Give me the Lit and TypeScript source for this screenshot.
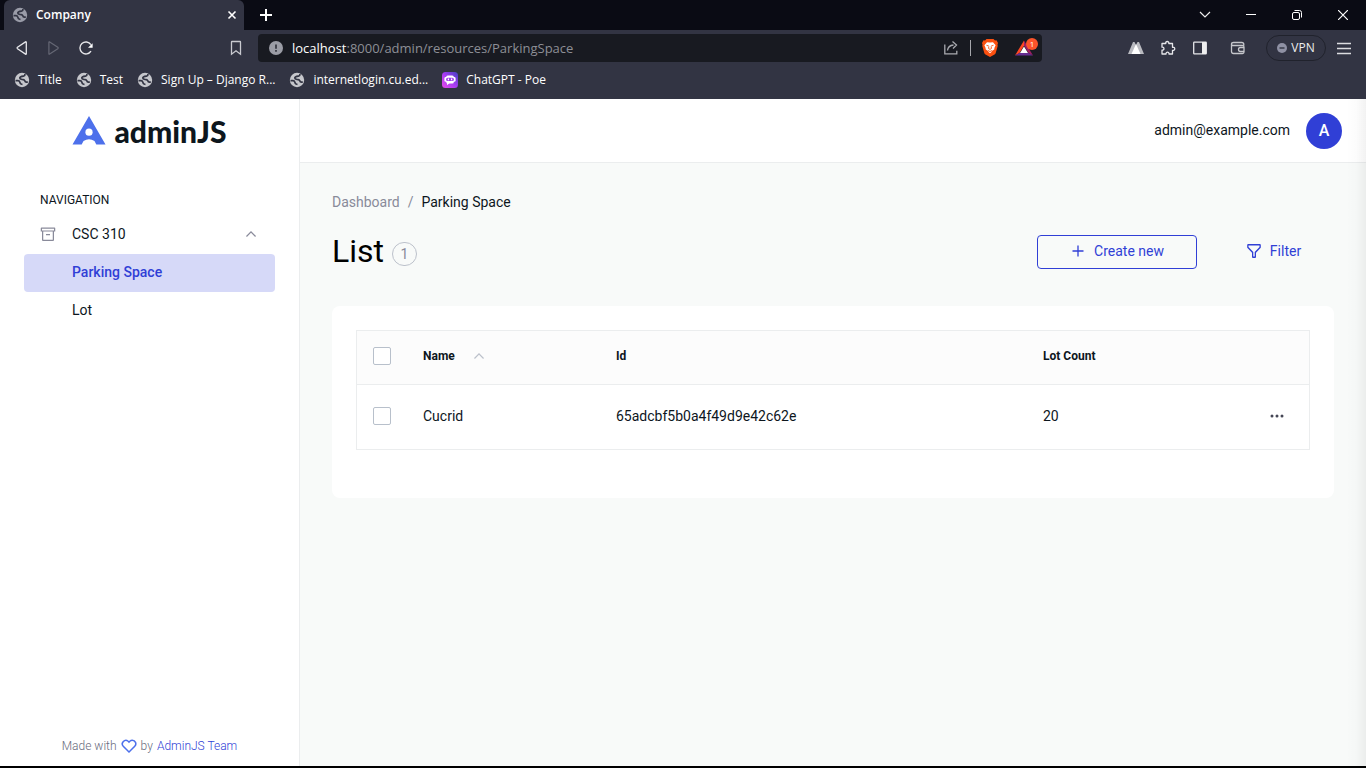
import { LitElement, html, css, svg } from "lit";
import { customElement, property } from "lit/decorators.js";

const globe = html`<svg class="globe" viewBox="0 0 16 16" width="16" height="16" aria-hidden="true">
  <circle cx="8" cy="8" r="7.200" fill="currentColor" />
  <path d="M1.500 8.600H4q1.700.2 1.900 1.700.1 1.700 2.600 2.200M11 1.800q.2 1.900-1.600 2.400-3.600.4-3.600 1.900 0 1.100 2 1.200 2.600 0 3 1.500.3 1.300 1.600 1.300h1.400"
    fill="none" stroke="#323443" stroke-width="1.700" stroke-linejoin="round" />
</svg>`;

const poe = html`<svg viewBox="0 0 16 16" width="16" height="16" aria-hidden="true">
  <defs><linearGradient id="poe" x1="0" y1="1" x2="1" y2="0">
    <stop offset="0" stop-color="#e84be8" /><stop offset=".5" stop-color="#a63bf2" /><stop offset="1" stop-color="#4340c0" />
  </linearGradient></defs>
  <rect width="16" height="16" rx="3.500" fill="url(#poe)" />
  <rect x="4.200" y="3.600" width="7.600" height="8" rx="1.500" fill="#fff" />
  <rect x="2.400" y="5" width="11.200" height="4.800" rx="1.400" fill="#fff" />
  <path d="M5 11v2.200L7.600 11z" fill="#fff" />
  <rect x="4" y="5.700" width="8" height="3.400" rx="1.700" fill="#a03bee" />
  <path d="M6.400 6.600v1.600M9.600 6.600v1.600" stroke="#fff" stroke-width="1.200" />
</svg>`;

@customElement("browser-frame")
class BrowserFrame extends LitElement {
  @property({ type: Array }) bookmarks = [
    { label: "Title", icon: globe },
    { label: "Test", icon: globe },
    { label: "Sign Up – Django R...", icon: globe },
    { label: "internetlogin.cu.ed...", icon: globe },
    { label: "ChatGPT - Poe", icon: poe },
  ];

  static styles = css`
    :host {
      display: block;
      background: #323443;
      color: #fff;
      font: 12px/16px "Open Sans", "Noto Sans", sans-serif;
    }
    * { box-sizing: border-box; }
    svg { display: block; flex: none; }
    button {
      display: flex; align-items: center; justify-content: center;
      border: 0; padding: 0; margin: 0; background: none; color: inherit; font: inherit;
    }
    .tabs { display: flex; height: 30px; background: #0a0b14; padding-left: 4px; }
    .tab {
      display: flex; align-items: center; gap: 8px; width: 240px; padding: 0 7px 0 8px;
      background: #323443; border-radius: 6px 6px 0 0; font-weight: 600;
    }
    .tab .globe { color: #9a9ca8; }
    .tab-title { flex: 1; }
    .add { width: 44px; }
    .window { display: flex; margin-left: auto; }
    .window button { width: 46px; }
    .toolbar { display: flex; align-items: center; height: 36px; padding: 0 14px; }
    .nav { display: flex; gap: 16px; width: 230px; }
    .nav .save { margin-left: auto; }
    .omnibox {
      display: flex; align-items: center; gap: 8px; width: 784px; height: 28px;
      margin-left: 14px; padding: 0 4px 0 10px; background: #181a21; border-radius: 4px;
    }
    .url { flex: 1; font-size: 13px; line-height: 18px; color: #8d8f96; white-space: nowrap; }
    .host { color: #fff; }
    .tools { display: flex; align-items: center; gap: 11px; }
    .rule { width: 1px; height: 16px; background: #a6a7ac; }
    .rewards { display: flex; margin-left: 6px; }
    .right { display: flex; align-items: center; margin-left: auto; gap: 16px; }
    .vpn {
      gap: 4px; width: 60px; height: 26px; border: 1px solid #20222c; border-radius: 13px;
      color: #eceded; margin-left: 4px;
    }
    .menu { margin-left: -6px; }
    .wallet { margin-left: 6px; }
    .bookmarks { display: flex; gap: 14px; height: 33px; padding: 6px 14px 0; }
    .bookmark { display: flex; align-items: center; gap: 8px; height: 16px; color: #fff; text-decoration: none; white-space: nowrap; }
    .bookmark .globe { color: #c6c7cc; }
    @media (max-width: 1320px) { .omnibox { width: auto; flex: 1; margin-right: 16px; } }
  `;

  render() {
    return html`
      <div class="tabs">
        <div class="tab">
          ${globe}<span class="tab-title">Company</span>
          <button aria-label="Close tab"><svg width="10" height="10" viewBox="0 0 10 10"><path d="M1.500 1.500l7 7M8.500 1.500l-7 7" stroke="#fff" stroke-width="1.600" /></svg></button>
        </div>
        <button class="add" aria-label="New tab"><svg width="12" height="12" viewBox="0 0 12 12"><path d="M6 0v12M0 6h12" stroke="#fff" stroke-width="2" /></svg></button>
        <div class="window">
          <button aria-label="Search tabs"><svg width="12" height="12" viewBox="0 0 12 12"><path d="M1 3l5 5 5-5" fill="none" stroke="#eee" stroke-width="1.200" /></svg></button>
          <button aria-label="Minimize"><svg width="10" height="10" viewBox="0 0 10 10"><path d="M0 4.500h10" stroke="#fff" /></svg></button>
          <button aria-label="Restore"><svg width="10" height="10" viewBox="0 0 10 10"><g fill="none" stroke="#fff"><rect x=".5" y="2.500" width="7" height="7" rx="1.500" /><path d="M2.500.500h5a2 2 0 0 1 2 2v5" /></g></svg></button>
          <button aria-label="Close"><svg width="10" height="10" viewBox="0 0 10 10"><path d="M0 0l10 10M10 0L0 10" stroke="#fff" stroke-width="1.200" /></svg></button>
        </div>
      </div>
      <div class="toolbar">
        <div class="nav">
          <button aria-label="Back"><svg width="16" height="16" viewBox="0 0 16 16"><path d="M12.300 2.300v11.400q0 .8-.8.400L3.500 8.700q-.8-.7 0-1.400l8-5.400q.8-.4.800.4z" fill="none" stroke="#e6e6ea" stroke-width="1.300" /></svg></button>
          <button aria-label="Forward"><svg width="16" height="16" viewBox="0 0 16 16"><path d="M2.900 2.300v11.400q0 .8.800.400L11.800 8.700q.8-.7 0-1.400L3.700 1.900q-.8-.4-.8.400z" fill="none" stroke="#656774" stroke-width="1.200" /></svg></button>
          <button aria-label="Reload"><svg width="16" height="16" viewBox="0 0 16 16"><path d="M13 11.200A6 6 0 1 1 12.900 4.600" fill="none" stroke="#e6e6ea" stroke-width="1.400" /><path d="M14.600 3.200v4.600H10z" fill="#fff" /></svg></button>
          <button class="save" aria-label="Bookmark this page"><svg width="16" height="16" viewBox="0 0 16 16"><path d="M3.500 2q0-.5.500-.5h8q.5 0 .5.500v12.200L8 10.800l-4.500 3.400z" fill="none" stroke="#c9cad0" stroke-width="1.300" /></svg></button>
        </div>
        <div class="omnibox">
          <svg width="16" height="16" viewBox="0 0 16 16"><circle cx="8" cy="8" r="7" fill="#9b9da6" /><path d="M8 4.500v4.200M8 10v1.700" stroke="#33353f" stroke-width="1.700" /></svg>
          <span class="url"><span class="host">localhost</span>:8000/admin/resources/ParkingSpace</span>
          <div class="tools">
            <button aria-label="Share"><svg width="16" height="16" viewBox="0 0 16 16"><path d="M1.800 4.500v9.300h12v-3M4.500 10.500q.5-5 6-5.500M9.500 1.500L13.500 5 10 8.500" fill="none" stroke="#a9aab0" stroke-width="1.300" /></svg></button>
            <span class="rule"></span>
            <button aria-label="Brave Shields"><svg width="16" height="18" viewBox="0 0 16 18"><path d="M4.500 0h7l1.500 1.500 1.500-.2L16 4l-.5 1.500.2 1.500-2 7q-.4 1-1.200 1.600L8 18l-4.500-2.400q-.8-.6-1.200-1.600L.3 7l.2-1.500L0 4l1.500-2.700 1.500.2z" fill="#fb5010" /><path d="M5 3.200L8 3.600l3-.4 2.600 3-1.100 2.600-.3 1.800-2 1.200L9.500 13 8 14.200 6.500 13l-.7-1.200-2-1.200-.3-1.800-1.100-2.600z" fill="#fff" /><path d="M4.500 6.300l2.300.7M11.500 6.300L9.200 7M6.900 7.500L6.500 9.400 8 10.400l1.500-1-.4-1.900M6 11.600l2 .9 2-.9" fill="none" stroke="#fb5010" stroke-width=".9" /></svg></button>
            <button class="rewards" aria-label="Brave Rewards, 1 notification"><svg width="23" height="20" viewBox="0 0 23 20"><path d="M9 2.500L0 17.500 4.500 15 9 7.500z" fill="#ff4724" /><path d="M9 2.500v5L13.500 15l4.500 2.500z" fill="#9e1f63" /><path d="M0 17.500h18L13.500 15h-9z" fill="#662d91" /><path d="M9 8.500L13 15H5z" fill="#fff" /><circle cx="17" cy="6" r="6" fill="#fb542b" /><text x="17" y="9" font-family="Open Sans" font-size="8" text-anchor="middle" fill="#fff">1</text></svg></button>
          </div>
        </div>
        <div class="right">
          <button aria-label="Extension"><svg width="16" height="16" viewBox="0 0 16 16"><path d="M0 14L5 2h1.500L8 5l1.500-3H11l5 12z" fill="#b9bac0" /><path d="M3.500 14L8 4l4.500 10z" fill="#fff" /></svg></button>
          <button aria-label="Extensions"><svg width="16" height="16" viewBox="0 0 16 16"><path d="M2 3.500h3.800C5 .8 9.400.8 8.800 3.500h3.700v3.800c3-.6 3 3.600 0 3v3.700H9c.3-2.400-3.200-2.400-3 0H2v-3.800c2.600.2 2.600-3.400 0-3z" fill="none" stroke="#e6e6ea" stroke-width="1.300" stroke-linejoin="round" /></svg></button>
          <button aria-label="Side panel"><svg width="16" height="16" viewBox="0 0 16 16"><rect x="1.700" y="2.200" width="12.600" height="11.600" rx=".6" fill="none" stroke="#e6e6ea" stroke-width="1.300" /><path d="M10 2h4v12h-4z" fill="#eee" /></svg></button>
          <button class="wallet" aria-label="Wallet"><svg width="16" height="16" viewBox="0 0 16 16"><g fill="none" stroke="#c5c6cb" stroke-width="1.300"><path d="M13.800 5.500v-1q0-2-2-2H3.500q-2 0-2 1.500t2 1.500h9q1.500 0 1.500 1.500v5q0 1.500-1.500 1.500h-9q-2 0-2-2V4" /><path d="M14 7.500h-3.500a2 2 0 0 0 0 4H14" /></g></svg></button>
          <button class="vpn"><svg width="10" height="10" viewBox="0 0 10 10"><circle cx="5" cy="5" r="5" fill="#8f91a4" /><path d="M2.500 5h5" stroke="#323443" stroke-width="1.400" /></svg>VPN</button>
          <button class="menu" aria-label="Menu"><svg width="16" height="16" viewBox="0 0 16 16"><path d="M1 3.500h14M1 8.500h14M1 13.500h14" stroke="#dcdce0" stroke-width="1.300" /></svg></button>
        </div>
      </div>
      <nav class="bookmarks" aria-label="Bookmarks">
        ${this.bookmarks.map((b) => html`<a class="bookmark" href="#">${b.icon}<span>${b.label}</span></a>`)}
      </nav>
    `;
  }
}

const shapes = {
  up: svg`<path d="M16 10l10 10-1.800 1.800L16 13.600l-8.200 8.200L6 20z" />`,
  archive: svg`<path d="M12 16h8v2.400h-8zM29 3H3a1.500 1.500 0 0 0-1.500 1.500V11H4v17a2 2 0 0 0 2 2h20a2 2 0 0 0 2-2V11h2.500V4.500A1.500 1.500 0 0 0 29 3zM25.500 27.500h-19V11h19zM28 8.800H4V5.500h24z" />`,
  add: svg`<path d="M17.300 14.700V5h-2.600v9.700H5v2.600h9.700V27h2.600v-9.700H27v-2.600z" />`,
  filter: svg`<path d="M18 30h-4a2 2 0 0 1-2-2v-8.600L3 10a2 2 0 0 1-.6-1.400V4a2 2 0 0 1 2-2h23.200a2 2 0 0 1 2 2v4.600A2 2 0 0 1 29 10l-9 9.400V28a2 2 0 0 1-2 2zM5 4.800v3.400l9.600 10v9h2.800v-9l9.600-10V4.800z" />`,
  heart: svg`<path d="M22.500 6a5.500 5.500 0 0 1 3.900 9.400L16 26 5.600 15.400a5.500 5.500 0 0 1 7.800-7.700L16 10.300l2.600-2.600A5.500 5.500 0 0 1 22.500 6m0-3a8.500 8.500 0 0 0-5.700 2.300L16 6l-.8-.7A8.500 8.500 0 0 0 3.400 17.500L16 30l12.600-12.500A8.500 8.500 0 0 0 22.500 3z" />`,
  dots: svg`<circle cx="6" cy="16" r="3" /><circle cx="16" cy="16" r="3" /><circle cx="26" cy="16" r="3" />`,
};
const icon = (name: keyof typeof shapes) =>
  html`<svg class="icon" viewBox="0 0 32 32" width="16" height="16" fill="currentColor" aria-hidden="true">${shapes[name]}</svg>`;

@customElement("app-root")
class AppRoot extends LitElement {
  @property({ type: Array }) records = [{ name: "Cucrid", id: "65adcbf5b0a4f49d9e42c62e", lots: 20 }];

  static styles = css`
    :host {
      display: flex; flex-direction: column; min-height: 100vh; box-sizing: border-box;
      border-bottom: 2px solid #000; background: #f8faf9;
      font: 14px/22px Roboto, sans-serif; color: #0d161d;
    }
    * { box-sizing: border-box; }
    a { color: inherit; text-decoration: none; }
    h1, h2 { margin: 0; font-weight: 400; }
    button { font: inherit; color: inherit; background: none; border: 0; padding: 0; margin: 0; }
    .icon { display: block; flex: none; }
    .app { position: relative; display: grid; grid-template-columns: 300px 1fr; flex: 1; }
    .app::after {
      content: ""; position: absolute; inset: 0 0 0 auto; width: 20px; pointer-events: none;
      background: linear-gradient(to right, rgba(0, 0, 0, 0), rgba(0, 0, 0, .01) 50%, rgba(0, 0, 0, .05));
    }
    .sidebar { display: flex; flex-direction: column; background: #fff; border-right: 1px solid #ebedee; }
    .logo { display: flex; align-items: center; justify-content: center; gap: 8px; height: 64px; font: 900 30px/32px Lato, sans-serif; }
    .menu { padding: 24px 24px 0; }
    .menu-title { padding: 1px 16px 0; font-size: 12px; line-height: 24px; }
    .item { display: flex; align-items: center; width: 100%; height: 38px; padding: 0 16px 2px; border-radius: 4px; text-align: left; }
    .item .icon { color: #898a9a; }
    .group { gap: 16px; margin-top: 3px; height: 39px; padding-bottom: 1px; }
    .group span { flex: 1; }
    .sub { padding-left: 48px; }
    .active { background: #d6d9f8; color: #303fd6; font-weight: 500; }
    .credit {
      display: flex; align-items: center; justify-content: center; gap: 4px; margin-top: auto; padding-bottom: 8px;
      font-size: 12px; line-height: 24px; font-weight: 300; color: #686b7d;
    }
    .credit .icon { color: #4d70eb; }
    .credit a { color: #303fd6; }
    .topbar {
      display: flex; align-items: center; justify-content: flex-end; gap: 16px; height: 64px; padding: 0 24px;
      background: #fff; border-bottom: 1px solid #ebedee;
    }
    .user { padding-bottom: 2px; }
    .avatar { width: 36px; height: 36px; border-radius: 50%; background: #303fd6; color: #fff; font-size: 16px; font-weight: 500; }
    .content { padding: 28px 32px; }
    .crumbs { display: flex; gap: 8px; color: #898a9a; }
    .crumbs .here { color: #0d161d; }
    .head { display: flex; align-items: flex-start; height: 36px; margin-top: 20px; }
    .head h2 { flex: 1; display: flex; align-items: center; gap: 8px; font-size: 32px; line-height: 36px; color: #000; }
    .count {
      display: flex; align-items: center; justify-content: center; width: 25px; height: 24px; margin-top: 6px;
      border: 1px solid #bcc1cb; border-radius: 12px; font-size: 14px; line-height: 22px; color: #898a9a;
    }
    .action {
      display: flex; align-items: center; justify-content: center; gap: 8px; height: 34px; margin-top: 2px;
      padding-bottom: 2px; color: #303fd6; border-radius: 4px;
    }
    .create { width: 160px; border: 1px solid #303fd6; }
    .filter { width: 121px; margin-left: 16px; }
    .card { margin-top: 37px; padding: 24px 24px 48px; background: #fff; border-radius: 8px; }
    table { width: 100%; table-layout: fixed; border-collapse: separate; border-spacing: 0; border: 1px solid #ebedee; }
    th, td { padding: 0 16px 3px; text-align: left; vertical-align: middle; }
    th { height: 54px; background: #fcfcfc; border-bottom: 1px solid #ebedee; font-size: 12px; font-weight: 700; line-height: 16px; }
    td { height: 64px; }
    .c-check { width: 50px; }
    .c-name { width: 193px; }
    .c-lots { width: 200px; }
    .c-more { width: 82px; }
    .sort { display: flex; align-items: center; gap: 16px; }
    .sort .icon { color: #bcc1cb; }
    .more { display: block; margin-left: auto; margin-right: 8px; color: #454655; }
    input { display: block; appearance: none; width: 18px; height: 18px; margin: 0; border: 1px solid #b8c0cb; border-radius: 2px; background: #fff; }
  `;

  render() {
    return html`
      <browser-frame></browser-frame>
      <div class="app">
        <aside class="sidebar">
          <a class="logo" href="#">
            <svg width="34" height="30" viewBox="0 0 34 30" aria-hidden="true"><path d="M17 0L33.500 28.500h-9.200L22.500 25q-5.500-3.500-11 0L9.700 28.500H.5z" fill="#4d70eb" /><circle cx="17" cy="16.200" r="3.600" fill="#fff" /></svg>
            adminJS
          </a>
          <nav class="menu">
            <div class="menu-title">NAVIGATION</div>
            <button class="item group">${icon("archive")}<span>CSC 310</span>${icon("up")}</button>
            <a class="item sub active" href="#">Parking Space</a>
            <a class="item sub" href="#">Lot</a>
          </nav>
          <div class="credit">Made with ${icon("heart")} by <a href="#">AdminJS Team</a></div>
        </aside>
        <main>
          <header class="topbar"><span class="user">admin@example.com</span><button class="avatar" aria-label="Account">A</button></header>
          <section class="content">
            <nav class="crumbs" aria-label="Breadcrumb"><a href="#">Dashboard</a><span>/</span><a class="here" href="#">Parking Space</a></nav>
            <div class="head">
              <h2>List <span class="count">1</span></h2>
              <button class="action create">${icon("add")}Create new</button>
              <button class="action filter">${icon("filter")}Filter</button>
            </div>
            <div class="card">
              <table>
                <colgroup><col class="c-check" /><col class="c-name" /><col /><col class="c-lots" /><col class="c-more" /></colgroup>
                <thead><tr>
                  <th><input type="checkbox" aria-label="Select all" /></th>
                  <th><a class="sort" href="#">Name ${icon("up")}</a></th>
                  <th>Id</th><th>Lot Count</th><th></th>
                </tr></thead>
                <tbody>
                  ${this.records.map((r) => html`<tr>
                    <td><input type="checkbox" aria-label="Select ${r.name}" /></td>
                    <td>${r.name}</td><td>${r.id}</td><td>${r.lots}</td>
                    <td><button class="more" aria-label="More actions">${icon("dots")}</button></td>
                  </tr>`)}
                </tbody>
              </table>
            </div>
          </section>
        </main>
      </div>
    `;
  }
}
